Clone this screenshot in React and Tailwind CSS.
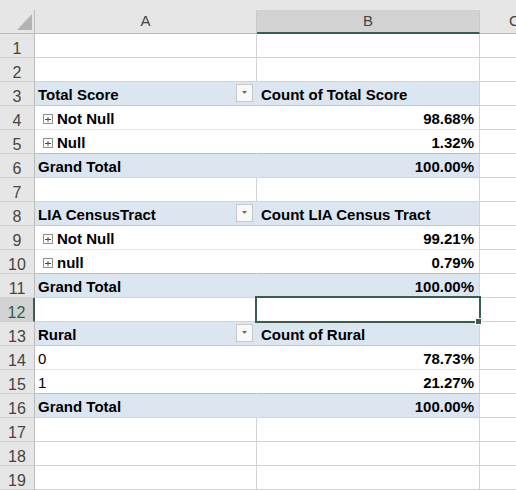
import React from 'react';

const rows = [
  { n: 1 },
  { n: 2 },
  { n: 3, kind: 'head', a: 'Total Score', b: 'Count of Total Score' },
  { n: 4, kind: 'item', a: 'Not Null', b: '98.68%', icon: true },
  { n: 5, kind: 'item', a: 'Null', b: '1.32%', icon: true, next: 'total' },
  { n: 6, kind: 'total', a: 'Grand Total', b: '100.00%' },
  { n: 7 },
  { n: 8, kind: 'head', a: 'LIA CensusTract', b: 'Count LIA Census Tract' },
  { n: 9, kind: 'item', a: 'Not Null', b: '99.21%', icon: true },
  { n: 10, kind: 'item', a: 'null', b: '0.79%', icon: true, next: 'total' },
  { n: 11, kind: 'total', a: 'Grand Total', b: '100.00%' },
  { n: 12, selected: true },
  { n: 13, kind: 'head', a: 'Rural', b: 'Count of Rural' },
  { n: 14, kind: 'item', a: '0', b: '78.73%', plain: true },
  { n: 15, kind: 'item', a: '1', b: '21.27%', plain: true, next: 'total' },
  { n: 16, kind: 'total', a: 'Grand Total', b: '100.00%' },
  { n: 17 },
  { n: 18 },
  { n: 19 },
];

function ExpandIcon() {
  return (
    <svg width="10" height="10" viewBox="0 0 10 10" className="mb-[3px] mr-[4px] shrink-0">
      <rect x="0.5" y="0.5" width="9" height="9" fill="#fff" stroke="#8f8f8f" />
      <path d="M2 5.5h6M5 3v5" stroke="#4a4a4a" strokeWidth="1" />
    </svg>
  );
}

function FilterButton() {
  return (
    <div className="ml-auto mr-[3px] flex h-[18px] w-[17px] shrink-0 items-center justify-center self-center border border-[#c9c9c9] bg-[#f9f9f9]">
      <svg width="5" height="3" viewBox="0 0 5 3">
        <path d="M0 0h5L2.5 3z" fill="#6a6a6a" />
      </svg>
    </div>
  );
}

function SheetRow({ row }) {
  const { n, kind, a, b, icon, next, selected, plain } = row;
  const pivot = Boolean(kind);
  const fill = kind === 'head' || kind === 'total' ? 'bg-[#dce6f1]' : 'bg-white';
  let line = 'border-b-[#d4d4d4]';
  if (kind === 'head') line = 'border-b-[#b8cce4]';
  if (kind === 'item') line = next === 'total' ? 'border-b-[#a9c1de]' : 'border-b-[#dce6f1]';

  return (
    <div className="flex h-[24px]">
      <div
        className={`flex w-[35px] shrink-0 items-end justify-center border-b border-b-[#d0d0d0] pb-[1px] text-[16px] leading-[14px] ${
          selected ? 'border-r-2 border-r-[#3b5e4c] bg-[#d2d2d2] text-[#2f5d49]' : 'border-r border-r-[#bcbcbc] bg-[#e6e6e6] text-[#444]'
        }`}
      >
        {n}
      </div>
      <div
        className={`flex w-[222px] shrink-0 items-end border-b border-r pb-[2px] text-[15px] leading-[17px] text-black ${line} ${
          pivot ? 'border-r-transparent' : 'border-r-[#d4d4d4]'
        } ${fill} ${icon ? 'pl-[8px]' : 'pl-[3px]'} ${plain ? 'font-normal' : 'font-bold'}`}
      >
        {icon && <ExpandIcon />}
        {a && <span>{a}</span>}
        {kind === 'head' && <FilterButton />}
      </div>
      <div
        className={`relative flex w-[223px] shrink-0 items-end border-b border-r border-r-[#d4d4d4] pb-[2px] text-[15px] font-bold leading-[17px] text-black ${line} ${fill} ${
          kind === 'head' ? 'pl-[4px]' : 'justify-end pr-[5px]'
        }`}
      >
        {b}
        {selected && (
          <>
            <div className="absolute -left-[2px] -top-[2px] z-10 h-[27px] w-[226px] border-2 border-[#3b5e4c]" />
            <div className="absolute left-[218px] top-[20px] z-20 h-[7px] w-[7px] border border-white bg-[#3b5e4c]" />
          </>
        )}
      </div>
      <div className="w-[70px] shrink-0 border-b border-r border-b-[#d4d4d4] border-r-[#d4d4d4] bg-white" />
    </div>
  );
}

export default function App() {
  return (
    <div className="h-[490px] w-[516px] overflow-hidden bg-white font-['Liberation_Sans',Arial,sans-serif]">
      <div className="h-[10px] bg-[#e6e6e6]" />
      <div className="flex h-[24px] bg-[#e6e6e6] text-[15px] leading-[17px] text-[#444]">
        <div className="relative w-[35px] shrink-0 border-b border-r border-b-[#bcbcbc] border-r-[#bcbcbc]">
          <svg width="15" height="16" viewBox="0 0 15 16" className="absolute bottom-[3px] right-[2px]">
            <path d="M15 0V16H0z" fill="#b3b3b3" />
          </svg>
        </div>
        <div className="flex w-[222px] shrink-0 items-end justify-center border-b border-r border-b-[#bcbcbc] border-r-[#c8c8c8] pb-[4px]">
          A
        </div>
        <div className="flex w-[223px] shrink-0 items-end justify-center border-b-2 border-r border-b-[#3b5e4c] border-r-[#c8c8c8] bg-[#d2d2d2] pb-[3px]">
          B
        </div>
        <div className="flex w-[70px] shrink-0 items-end justify-center border-b border-r border-b-[#bcbcbc] border-r-[#c8c8c8] pb-[4px]">
          C
        </div>
      </div>
      {rows.map((row) => (
        <SheetRow key={row.n} row={row} />
      ))}
    </div>
  );
}
